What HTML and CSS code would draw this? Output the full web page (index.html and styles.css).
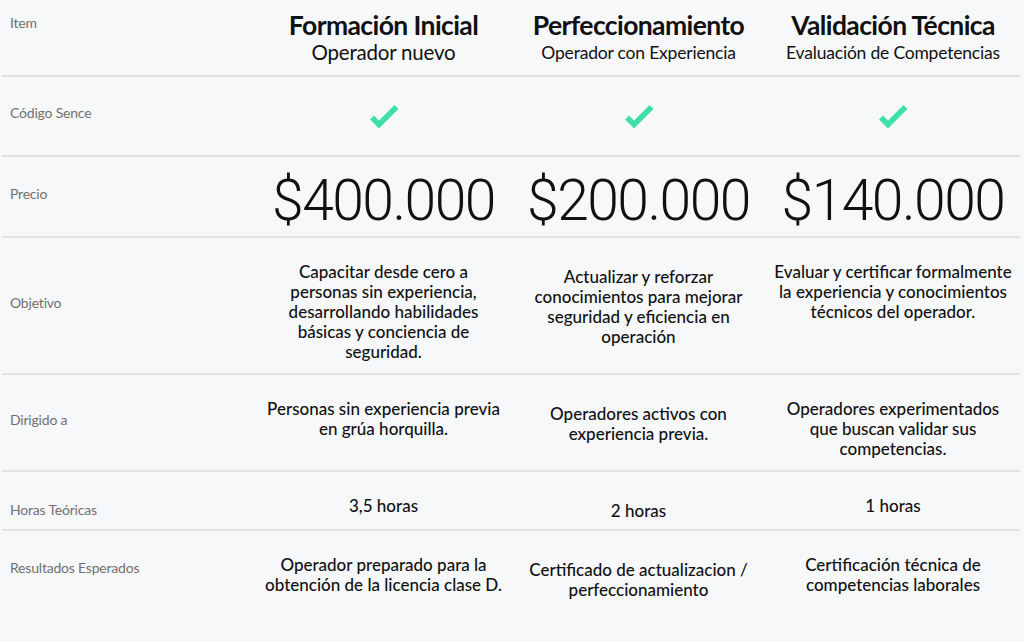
FILE: index.html
```html
<!DOCTYPE html>
<html lang="es">
<head>
<meta charset="utf-8">
<title>Comparativa de cursos</title>
<link rel="stylesheet" href="styles.css">
</head>
<body>
<div class="table">
  <div class="row row-head">
    <div class="label label-top">Item</div>
    <div class="cell head"><div class="title">Formación Inicial</div><div class="sub sub-lg">Operador nuevo</div></div>
    <div class="cell head"><div class="title">Perfeccionamiento</div><div class="sub">Operador con Experiencia</div></div>
    <div class="cell head"><div class="title">Validación Técnica</div><div class="sub">Evaluación de Competencias</div></div>
  </div>
  <div class="row row-check">
    <div class="label">Código Sence</div>
    <div class="cell"><svg class="check" viewBox="0 0 30 28"><path d="M3 15.5 L10 22.5 L27.5 5"/></svg></div>
    <div class="cell"><svg class="check" viewBox="0 0 30 28"><path d="M3 15.5 L10 22.5 L27.5 5"/></svg></div>
    <div class="cell"><svg class="check" viewBox="0 0 30 28"><path d="M3 15.5 L10 22.5 L27.5 5"/></svg></div>
  </div>
  <div class="row row-price">
    <div class="label">Precio</div>
    <div class="cell price">$400.000</div>
    <div class="cell price">$200.000</div>
    <div class="cell price">$140.000</div>
  </div>
  <div class="row row-obj">
    <div class="label">Objetivo</div>
    <div class="cell text w200">Capacitar desde cero a personas sin experiencia, desarrollando habilidades básicas y conciencia de seguridad.</div>
    <div class="cell text mid w216">Actualizar y reforzar conocimientos para mejorar seguridad y eficiencia en operación</div>
    <div class="cell text wfull">Evaluar y certificar formalmente la experiencia y conocimientos técnicos del operador.</div>
  </div>
  <div class="row row-dir">
    <div class="label">Dirigido a</div>
    <div class="cell text w236">Personas sin experiencia previa en grúa horquilla.</div>
    <div class="cell text mid w216">Operadores activos con experiencia previa.</div>
    <div class="cell text w220">Operadores experimentados que buscan validar sus competencias.</div>
  </div>
  <div class="row row-hours">
    <div class="label label-low">Horas Teóricas</div>
    <div class="cell text">3,5 horas</div>
    <div class="cell text mid">2 horas</div>
    <div class="cell text">1 horas</div>
  </div>
  <div class="row row-res">
    <div class="label label-res">Resultados Esperados</div>
    <div class="cell text wfull">Operador preparado para la obtención de la licencia clase D.</div>
    <div class="cell text mid">Certificado de actualizacion / perfeccionamiento</div>
    <div class="cell text w216">Certificación técnica de competencias laborales</div>
  </div>
</div>
</body>
</html>
```
FILE: styles.css
```css
html, body {
  margin: 0;
  padding: 0;
  background: #f7f8fa;
}
body {
  font-family: "Lato", "Liberation Sans", sans-serif;
  color: #111;
  height: 641px;
  overflow: hidden;
}
.table {
  margin-left: 2px;
  width: 1018px;
}
.row {
  display: grid;
  grid-template-columns: 254px 255px 255px 254px;
  border-bottom: 2px solid #e3e4e7;
  box-sizing: border-box;
}
.row-head { height: 77px; }
.row-check { height: 80px; }
.row-price { height: 81px; }
.row-obj { height: 137px; }
.row-dir { height: 97px; }
.row-hours { height: 59px; }
.row-res { border-bottom: none; height: 110px; }

.label {
  padding-left: 8px;
  padding-bottom: 7px;
  font-size: 14px;
  color: #707070;
  display: flex;
  align-items: center;
  letter-spacing: -0.2px;
}
.label-top { align-items: flex-start; padding-top: 14px; padding-bottom: 0; }
.label-low { padding-top: 17px; padding-bottom: 0; }
.label-res { align-items: flex-start; padding-top: 28px; padding-bottom: 0; }

.cell {
  display: flex;
  flex-direction: column;
  align-items: center;
  justify-content: center;
  text-align: center;
  box-sizing: border-box;
}
.head {
  justify-content: flex-start;
  padding-top: 10px;
}
.title {
  font-size: 26.5px;
  font-weight: 700;
  letter-spacing: -0.6px;
  line-height: 30px;
}
.sub {
  font-size: 17.5px;
  line-height: 25px;
  letter-spacing: -0.2px;
}
.sub-lg { font-size: 20.5px; }

.check {
  width: 30px;
  height: 28px;
}
.check path {
  fill: none;
  stroke: #3ee0a6;
  stroke-width: 5.5;
}
.price {
  font-family: "Roboto", "Liberation Sans", sans-serif;
  font-weight: 300;
  font-size: 57px;
  letter-spacing: -1.5px;
  color: #111;
  padding-top: 8px;
}
.text {
  font-size: 17px;
  font-weight: 500;
  line-height: 20px;
  justify-content: flex-start;
  padding: 24px 8px 0;
}
.mid { padding-top: 29px; }
.w200 { padding-left: 27px; padding-right: 27px; }
.w216 { padding-left: 19px; padding-right: 19px; }
.w220 { padding-left: 17px; padding-right: 17px; }
.w236 { padding-left: 9px; padding-right: 9px; }
.wfull { padding-left: 6px; padding-right: 6px; }
```
